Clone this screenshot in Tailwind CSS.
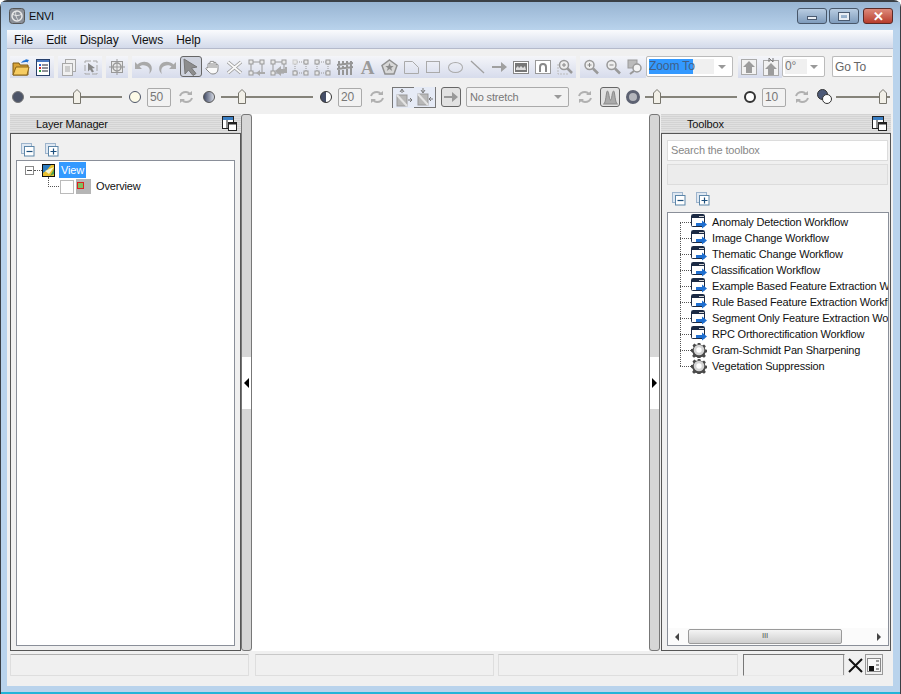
<!DOCTYPE html>
<html lang="en">
<head>
<meta charset="UTF-8">
<title>ENVI</title>
<script src="https://cdn.jsdelivr.net/npm/@tailwindcss/browser@4"></script>
</head>
<body class="bg-white overflow-hidden font-['Liberation_Sans',sans-serif] text-[11px] tracking-[-0.17px] text-[#111]">

<!-- shared icons -->
<svg class="hidden" width="0" height="0">
  <symbol id="refresh" viewBox="0 0 16 16"><path d="M2 7c1-3 3-4 6-4 2 0 3 1 4 2M14 9c-1 3-3 4-6 4-2 0-3-1-4-2" fill="none" stroke="#b0b0b0" stroke-width="2"/><path d="M9 6h5V2zM7 10H2v4z" fill="#b0b0b0"/></symbol>
  <symbol id="collapse" viewBox="0 0 14 14"><rect x=".5" y=".5" width="10" height="10" fill="#dfe8f2" stroke="#9db4cc"/><rect x="3.500" y="3.500" width="9.500" height="9.500" fill="#fff" stroke="#5d86a8"/><path d="M5.500 8.500h6" stroke="#1d4f7c" stroke-width="1.200"/></symbol>
  <symbol id="expand" viewBox="0 0 14 14"><rect x=".5" y=".5" width="10" height="10" fill="#dfe8f2" stroke="#9db4cc"/><rect x="3.500" y="3.500" width="9.500" height="9.500" fill="#fff" stroke="#5d86a8"/><path d="M5.500 8.500h6M8.500 5.500v6" stroke="#1d4f7c" stroke-width="1.200"/></symbol>
  <symbol id="dock" viewBox="0 0 15 15"><rect x=".5" y=".5" width="11" height="12" fill="#fff" stroke="#222"/><path d="M1 1h10v3H1z" fill="#3b7fc4"/><path d="M5 4v8" stroke="#222"/><rect x="6.500" y="6.500" width="8" height="8" fill="#fff" stroke="#222"/><path d="M7 7h7v1.500H7z" fill="#222"/></symbol>
  <symbol id="workflow" viewBox="0 0 16 16"><rect x=".5" y=".5" width="13" height="12" rx="1" fill="#fff" stroke="#1b2a44"/><path d="M1 1h12v3H1z" fill="#1b2a44"/><path d="M8 2h5v1H8z" fill="#d0d0d0"/><path d="M5 9h6V6.500l5 4-5 4V12H5z" fill="#1f6fd0"/></symbol>
  <symbol id="gear" viewBox="0 0 18 18"><path d="M7.500 1h3l.5 2.200 1.700.7 2-1.200 2 2-1.200 2 .7 1.700 2.200.5v2.600l-2.200.5-.7 1.700 1.200 2-2 2-2-1.200-1.700.7-.5 2.200h-3l-.5-2.200-1.700-.7-2 1.200-2-2 1.200-2-.7-1.700L0 10.600V8l2.200-.5.700-1.700-1.200-2 2-2 2 1.200L7.400 3z" fill="#4a4a4a"/><circle cx="9" cy="9" r="6" fill="#d4d4d4"/><circle cx="9" cy="9" r="3" fill="#fff"/></symbol>
  <symbol id="thumb" viewBox="0 0 8 15"><path d="M4 .5 7.500 4v10.500h-7V4z" fill="#f2f0e8" stroke="#77756c"/></symbol>
</svg>

<div class="w-[901px] h-[694px] flex flex-col rounded-t-[7px] border-t-2 border-x border-[#3a3f45] bg-[#b9d3ec]">

  <!-- title bar -->
  <div class="h-[28px] flex items-center bg-gradient-to-b from-[#98b4d2] to-[#b9d3ec] pl-[8px] pr-[7px] shrink-0">
    <svg width="16" height="16" viewBox="0 0 16 16"><rect x=".5" y=".5" width="15" height="15" rx="3" fill="#8c9199" stroke="#555"/><circle cx="8" cy="8" r="5" fill="none" stroke="#e8e8e8" stroke-width="1.500"/><path d="M3 6c3 2 7 2 10 0M7 3c-1 3 0 7 3 10" fill="none" stroke="#e8e8e8"/></svg>
    <span class="ml-[4px] text-[#0c0c0c]">ENVI</span>
    <div class="ml-auto flex gap-[2px] items-start">
      <div class="w-[30px] h-[16px] rounded-[3px] border border-[#48576a] bg-gradient-to-b from-[#b9cde2] to-[#7f9cbc] flex items-center justify-center"><div class="w-[10px] h-[4px] mt-[4px] bg-[#e9eef4] border border-[#4a5a70]"></div></div>
      <div class="w-[30px] h-[16px] rounded-[3px] border border-[#48576a] bg-gradient-to-b from-[#b9cde2] to-[#7f9cbc] flex items-center justify-center"><div class="w-[10px] h-[7px] border-2 border-[#e9eef4] outline outline-[#4a5a70]"></div></div>
      <div class="ml-[2px] w-[30px] h-[16px] rounded-[3px] border border-[#5b2a26] bg-gradient-to-b from-[#dd8a7b] to-[#b73b2c] flex items-center justify-center text-white font-bold text-[13px] leading-none">✕</div>
    </div>
  </div>

  <!-- client area -->
  <div class="mx-[6px] w-[886px] h-[656px] shrink-0 bg-[#f0f0f0] flex flex-col">

    <!-- menu -->
    <div class="h-[19px] shrink-0 flex items-center pt-[2px] pl-[7px] gap-[13px] text-[12px] tracking-[-0.05px] bg-gradient-to-b from-[#fafbfd] to-[#d3daea] border-b border-[#b5bacb]">
      <span>File</span><span>Edit</span><span>Display</span><span>Views</span><span>Help</span>
    </div>

    <!-- toolbar row 1 -->
    <div class="mt-[7px] h-[22px] shrink-0 flex pl-[3px] pr-[1px] text-[#777]">
      <div class="flex w-[44px] bg-gradient-to-b from-[#f4f5f9] to-[#d7dcec]">
        <div class="w-[22px] flex items-center justify-center"><svg width="18" height="17" viewBox="0 0 18 17"><path d="M1 4h6l1 2h8v10H1z" fill="#d9a338" stroke="#7d5a16"/><path d="M1 16l3-8h13l-2 8z" fill="#f6cc62" stroke="#8a6418"/><path d="M9 4c1-2 3-3 5-3l-1-1 4 1-2 3V3c-2 0-4 0-6 1z" fill="#1e6fd0"/></svg></div>
        <div class="w-[22px] flex items-center justify-center"><svg width="14" height="17" viewBox="0 0 14 17"><rect x=".5" y=".5" width="13" height="16" fill="#fff" stroke="#28406a"/><path d="M1 1h12v2H1z" fill="#4a78c0"/><path d="M3 5h2v2H3z" fill="#2c60d0"/><path d="M3 8h2v2H3z" fill="#d02c2c"/><path d="M3 11h2v2H3z" fill="#2ca040"/><path d="M6 6h6M6 9h6M6 12h6" stroke="#223"/></svg></div>
      </div>
      <div class="ml-[4px] flex w-[44px] bg-gradient-to-b from-[#f4f5f9] to-[#d7dcec]">
        <div class="w-[22px] flex items-center justify-center"><svg width="16" height="17" viewBox="0 0 16 17" fill="#f0f0f0" stroke="#a8a8a8"><rect x="4.500" y=".5" width="10" height="12"/><rect x="1.500" y="4.500" width="10" height="12"/><path d="M4 8h5M4 10h5M4 12h5"/></svg></div>
        <div class="w-[22px] flex items-center justify-center"><svg width="14" height="15" viewBox="0 0 14 15"><path d="M1 1h12v13H1z" fill="none" stroke="#a8a8a8" stroke-dasharray="6 2"/><path d="M4 3l7 5-3 .5 2 3-2 1-2-3-2 2z" fill="#888"/></svg></div>
      </div>
      <div class="ml-[4px] w-[22px] bg-gradient-to-b from-[#f4f5f9] to-[#d7dcec] flex items-center justify-center"><svg width="16" height="16" viewBox="0 0 16 16" fill="none" stroke="#999"><rect x="2.500" y="2.500" width="11" height="11" fill="#e8e8e8"/><circle cx="8" cy="8" r="4" stroke-width="1.500"/><path d="M8 0v16M0 8h16"/></svg></div>
      <div class="ml-[4px] flex w-[444px] bg-gradient-to-b from-[#f4f5f9] to-[#d7dcec]">
        <div class="w-[24px] flex items-center justify-center"><svg width="19" height="17" viewBox="0 0 19 17"><path d="M1 3v7h7L5.500 7.500C8 5.500 13 6 15 9c1 1.500 1 4 0 6 3-2 4-7 1-10-3-3-9-3-12.500.5z" fill="#a9a9a9"/></svg></div>
        <div class="w-[24px] flex items-center justify-center"><svg width="19" height="17" viewBox="0 0 19 17"><g transform="matrix(-1 0 0 1 19 0)"><path d="M1 3v7h7L5.500 7.500C8 5.500 13 6 15 9c1 1.500 1 4 0 6 3-2 4-7 1-10-3-3-9-3-12.500.5z" fill="#a9a9a9"/></g></svg></div>
        <div class="w-[22px] h-[21px] rounded-[3px] border border-[#666] bg-[#cfd3de] flex items-center justify-center"><svg width="17" height="18" viewBox="0 0 17 18"><path d="M2 1l13 8-5.500 1 4.500 5.500-3 2L6.500 12 3 16z" fill="#8d8d8d" stroke="#777"/></svg></div>
        <div class="w-[22px] flex items-center justify-center"><svg width="15" height="15" viewBox="0 0 15 15"><path d="M3 8V4c0-1 2-1 2 0V2c0-1 2-1 2 0v0c0-1 2-1 2 0v1c0-1 2-1 2 0v2c0-1 2-1 2 0v4c0 3-2 5-5 5-2 0-3-1-4-2L1 9c-.5-1 1-2 2-1z" fill="#fafafa" stroke="#8a8a8a"/><path d="M5 4v4M7 3v5M9 3v5M11 5v3" stroke="#8a8a8a"/></svg></div>
        <div class="w-[22px] flex items-center justify-center"><svg width="17" height="15" viewBox="0 0 17 15"><path d="M2 2l13 11M15 2L2 13" stroke="#9a9a9a" stroke-width="3.500"/><path d="M2 2l13 11M15 2L2 13" stroke="#f8f8f8" stroke-width="1.800"/></svg></div>
        <div class="w-[22px] flex items-center justify-center"><svg width="17" height="17" viewBox="0 0 17 17" fill="#e8e8e8" stroke="#999"><path d="M3 3h11v11H3z" fill="none"/><rect x="1" y="1" width="4" height="4"/><rect x="12" y="1" width="4" height="4"/><rect x="1" y="12" width="4" height="4"/><path d="M17 13h-5v-2l-4 3 4 3v-2h5z" fill="#aaa" stroke="none"/></svg></div>
        <div class="w-[22px] flex items-center justify-center"><svg width="17" height="17" viewBox="0 0 17 17" fill="#e8e8e8" stroke="#999"><path d="M3 3h11v11H3z" fill="none"/><rect x="1" y="1" width="4" height="4"/><rect x="12" y="1" width="4" height="4"/><rect x="1" y="12" width="4" height="4"/><path d="M17 8v6h-6v3l-6-5 6-5v3h4V8z" fill="#aaa" stroke="none"/></svg></div>
        <div class="w-[22px] flex items-center justify-center"><svg width="17" height="17" viewBox="0 0 17 17" fill="#e8e8e8" stroke="#999"><path d="M5 3h7M3 5v7M14 5v7M5 14h7" fill="none" stroke-dasharray="1 1"/><rect x="1" y="1" width="4" height="4" stroke="#ccc"/><rect x="12" y="1" width="4" height="4"/><rect x="1" y="12" width="4" height="4"/><rect x="12" y="12" width="4" height="4"/></svg></div>
        <div class="w-[22px] flex items-center justify-center"><svg width="17" height="17" viewBox="0 0 17 17" fill="#e8e8e8" stroke="#999"><path d="M3 5v7M14 5v7M5 3h7M5 14h7" fill="none" stroke-dasharray="1 1"/><rect x="1" y="1" width="4" height="4"/><rect x="12" y="1" width="4" height="4"/><rect x="1" y="12" width="4" height="4"/><rect x="12" y="12" width="4" height="4"/></svg></div>
        <div class="w-[23px] flex items-center justify-center"><svg width="16" height="15" viewBox="0 0 16 15" stroke="#969696" stroke-width="2"><path d="M2 1v14M6 1v14M10 1v14M14 1v14M0 5l16-2M0 9l16-2"/></svg></div>
        <div class="w-[22px] flex items-center justify-center font-['Liberation_Serif',serif] font-bold text-[19px] leading-none text-[#9a9a9a]">A</div>
        <div class="w-[22px] flex items-center justify-center"><svg width="17" height="16" viewBox="0 0 17 16"><path d="M8.500 1L16 6.500 13 15H4L1 6.500z" fill="#d8d8d8" stroke="#909090" stroke-width="1.500"/><path d="M8.500 4l1.200 3h3l-2.500 2 1 3-2.700-2-2.700 2 1-3L4.300 7h3z" fill="#8c8c8c"/></svg></div>
        <div class="w-[22px] flex items-center justify-center"><svg width="15" height="13" viewBox="0 0 15 13"><path d="M.5.5h8l6 6v6H.5z" fill="none" stroke="#aaa"/></svg></div>
        <div class="w-[22px] flex items-center justify-center"><div class="w-[14px] h-[12px] border border-[#aaa]"></div></div>
        <div class="w-[22px] flex items-center justify-center"><div class="w-[15px] h-[11px] rounded-[50%] border border-[#aaa]"></div></div>
        <div class="w-[22px] flex items-center justify-center"><svg width="15" height="14" viewBox="0 0 15 14"><path d="M1 1l13 12" stroke="#a0a0a0" stroke-width="1.300"/></svg></div>
        <div class="w-[22px] flex items-center justify-center"><svg width="15" height="10" viewBox="0 0 15 10"><path d="M0 4h9V0l6 5-6 5V6H0z" fill="#a0a0a0"/></svg></div>
        <div class="w-[22px] flex items-center justify-center"><svg width="16" height="13" viewBox="0 0 16 13"><rect x=".5" y=".5" width="15" height="12" fill="#fff" stroke="#888"/><rect x="2" y="2" width="12" height="9" fill="#777"/><path d="M3 9V7l2-2 1 2 2-2 2 2 2-2 1 4z" fill="#ddd"/></svg></div>
        <div class="w-[22px] flex items-center justify-center"><svg width="16" height="14" viewBox="0 0 16 14"><rect x=".5" y=".5" width="15" height="13" fill="#fff" stroke="#999"/><path d="M4 12V7a4 4 0 0 1 8 0v5h-2V7a2 2 0 0 0-4 0v5z" fill="#888"/></svg></div>
        <div class="w-[22px] flex items-center justify-center"><svg width="16" height="16" viewBox="0 0 16 16"><path d="M1 5v10h10" fill="none" stroke="#bbb" stroke-dasharray="2 1"/><circle cx="7" cy="6" r="4.500" fill="#eee" stroke="#999" stroke-width="1.500"/><path d="M5 6h4M7 4v4" stroke="#888"/><path d="M10 9l5 5" stroke="#999" stroke-width="2.500"/></svg></div>
      </div>
      <div class="ml-[4px] flex w-[66px] bg-gradient-to-b from-[#f4f5f9] to-[#d7dcec]">
        <div class="w-[22px] flex items-center justify-center"><svg width="16" height="16" viewBox="0 0 16 16"><circle cx="6.500" cy="6" r="4.500" fill="#eee" stroke="#999" stroke-width="1.500"/><path d="M4.500 6h4M6.500 4v4" stroke="#888"/><path d="M10 9.500l5 5" stroke="#999" stroke-width="2.500"/></svg></div>
        <div class="w-[22px] flex items-center justify-center"><svg width="16" height="16" viewBox="0 0 16 16"><circle cx="6.500" cy="6" r="4.500" fill="#eee" stroke="#999" stroke-width="1.500"/><path d="M4.500 6h4" stroke="#888"/><path d="M10 9.500l5 5" stroke="#999" stroke-width="2.500"/></svg></div>
        <div class="w-[22px] flex items-center justify-center"><svg width="16" height="16" viewBox="0 0 16 16"><rect x="1" y="1" width="9" height="8" fill="#bbb" stroke="#999"/><circle cx="10" cy="9" r="4" fill="#f4f4f4" stroke="#999" stroke-width="1.500"/><path d="M7 12l-4 3" stroke="#999" stroke-width="2"/></svg></div>
      </div>
      <div class="w-[87px] h-[21px] bg-white border border-[#bbb] rounded-[2px] flex items-center px-[2px] text-[12px] tracking-[-0.1px]">
        <div class="w-[65px] h-[15px] bg-[#f0f0f0]"><div class="w-[44px] h-[15px] leading-[15px] bg-[#3399ff] text-[#3f5f88] whitespace-nowrap">Zoom To</div></div>
        <span class="ml-auto mr-[4px] w-0 h-0 border-x-[4px] border-x-transparent border-t-[4px] border-t-[#999]"></span>
      </div>
      <div class="ml-[5px] flex w-[44px] bg-gradient-to-b from-[#f4f5f9] to-[#d7dcec]">
        <div class="w-[22px] flex items-center justify-center"><svg width="16" height="16" viewBox="0 0 16 16"><rect x=".5" y=".5" width="15" height="15" fill="#f2f2f2" stroke="#aaa"/><path d="M8 2l6 6h-3v6H5V8H2z" fill="#9c9c9c"/></svg></div>
        <div class="w-[22px] flex items-center justify-center"><svg width="16" height="18" viewBox="0 0 16 18"><rect x=".5" y="2.500" width="15" height="15" fill="#f2f2f2" stroke="#aaa"/><path d="M8 5l6 6h-3v6H5v-6H2z" fill="#9c9c9c"/><path d="M6 4V0l4 4V0" fill="none" stroke="#777"/></svg></div>
      </div>
      <div class="w-[43px] h-[21px] bg-white border border-[#bbb] rounded-[2px] flex items-center px-[2px] text-[12px] text-[#777]">
        <span class="bg-[#f0f0f0] w-[22px] leading-[15px]">0°</span>
        <span class="ml-auto mr-[4px] w-0 h-0 border-x-[4px] border-x-transparent border-t-[4px] border-t-[#999]"></span>
      </div>
      <div class="ml-[7px] flex-1 h-[21px] bg-white border-y border-l border-[#bbb] rounded-l-[2px] flex items-center px-[2px] text-[12px] text-[#666]">Go To</div>
    </div>

    <!-- toolbar row 2 -->
    <div class="mt-[7px] h-[24px] shrink-0 flex items-center pl-[5px] text-[#777]">
      <div class="w-[12px] h-[12px] rounded-full bg-[#4d5568] border border-[#777]"></div>
      <div class="relative ml-[6px] w-[92px] h-[2px] bg-[#85837a]"><svg class="absolute left-[43px] top-[-7px]" width="8" height="15"><use href="#thumb"/></svg></div>
      <div class="ml-[7px] w-[12px] h-[12px] rounded-full bg-[#fdfbe8] border border-[#4d5568]"></div>
      <div class="ml-[6px] w-[24px] h-[19px] bg-[#f2f2f2] border border-[#aaa] rounded-[2px] flex items-center px-[2px] text-[12px]">50</div>
      <svg class="ml-[7px]" width="16" height="16"><use href="#refresh"/></svg>
      <div class="ml-[9px] w-[12px] h-[12px] rounded-full bg-gradient-to-r from-[#454e68] to-[#d8dce6] border border-[#555]"></div>
      <div class="relative ml-[6px] w-[92px] h-[2px] bg-[#85837a]"><svg class="absolute left-[17px] top-[-7px]" width="8" height="15"><use href="#thumb"/></svg></div>
      <div class="ml-[7px] w-[12px] h-[12px] rounded-full bg-gradient-to-r from-[#454e68] from-50% to-white to-50% border border-[#333]"></div>
      <div class="ml-[6px] w-[24px] h-[19px] bg-[#f2f2f2] border border-[#aaa] rounded-[2px] flex items-center px-[2px] text-[12px]">20</div>
      <svg class="ml-[7px]" width="16" height="16"><use href="#refresh"/></svg>
      <div class="ml-[7px] w-[22px] h-[21px] border-l border-t border-[#777] bg-[#e6ebf6] flex items-center justify-center"><svg width="18" height="18" viewBox="0 0 18 18"><rect x="2" y="6" width="10" height="11" fill="#b8b8b8" stroke="#999"/><path d="M2 6l10 11" stroke="#e4e4e4" stroke-width="2"/><path d="M7 4V1M5 3l2-3 2 3M13 11h4M15 9l2 2-2 2" fill="none" stroke="#777"/></svg></div>
      <div class="w-[22px] h-[21px] border-r border-b border-[#777] bg-[#e6ebf6] flex items-center justify-center"><svg width="18" height="18" viewBox="0 0 18 18"><rect x="2" y="6" width="10" height="11" fill="#b8b8b8" stroke="#999"/><path d="M2 6l10 11" stroke="#e4e4e4" stroke-width="2"/><path d="M7 0v4M5 2l2 3 2-3M17 11h-4M15 9l-2 2 2 2" fill="none" stroke="#777"/></svg></div>
      <div class="ml-[5px] w-[20px] h-[20px] border border-[#666] rounded-[3px] bg-[#e2e2e2] flex items-center justify-center"><svg width="14" height="12" viewBox="0 0 14 12"><path d="M0 5h8V1l6 5-6 5V7H0z" fill="#999"/></svg></div>
      <div class="ml-[5px] w-[103px] h-[20px] bg-[#f2f2f2] border border-[#aaa] rounded-[2px] flex items-center px-[3px]">
        No stretch
        <span class="ml-auto mr-[3px] w-0 h-0 border-x-[4px] border-x-transparent border-t-[4px] border-t-[#999]"></span>
      </div>
      <svg class="ml-[8px]" width="16" height="16"><use href="#refresh"/></svg>
      <div class="ml-[7px] w-[20px] h-[20px] border border-[#666] rounded-[3px] bg-[#e2e2e2] flex items-center justify-center"><svg width="15" height="15" viewBox="0 0 15 15"><path d="M.5 14C3 14 3 1 4.500 1S6 10 7.500 10 9 1 10.500 1 12 14 14.500 14z" fill="#aaa" stroke="#888"/></svg></div>
      <div class="ml-[6px] w-[14px] h-[14px] rounded-full border-[3px] border-[#5d6272] bg-[#b4b6bc]"></div>
      <div class="relative ml-[5px] w-[92px] h-[2px] bg-[#85837a]"><svg class="absolute left-[8px] top-[-7px]" width="8" height="15"><use href="#thumb"/></svg></div>
      <div class="ml-[7px] w-[12px] h-[12px] rounded-full bg-white border-2 border-[#333]"></div>
      <div class="ml-[6px] w-[24px] h-[19px] bg-[#f2f2f2] border border-[#aaa] rounded-[2px] flex items-center px-[2px] text-[12px]">10</div>
      <svg class="ml-[8px]" width="16" height="16"><use href="#refresh"/></svg>
      <div class="relative ml-[7px] w-[16px] h-[16px]">
        <div class="absolute left-0 top-0 w-[11px] h-[11px] rounded-full bg-[#4d5a78] border border-[#333]"></div>
        <div class="absolute left-[5px] top-[5px] w-[10px] h-[10px] rounded-full bg-white border border-[#333]"></div>
      </div>
      <div class="relative ml-[3px] w-[54px] h-[2px] bg-[#85837a]"><svg class="absolute left-[43px] top-[-7px]" width="8" height="15"><use href="#thumb"/></svg></div>
    </div>

    <!-- panels -->
    <div class="mt-[5px] h-[537px] shrink-0 flex pl-[3px]">
      <!-- layer manager -->
      <div class="w-[231px] flex flex-col">
        <div class="h-[19px] shrink-0 flex items-center pl-[26px] pr-[4px] bg-[repeating-linear-gradient(180deg,#d3d3d3_0,#d3d3d3_1px,#e0e0e0_1px,#e0e0e0_2px)]">
          <span class="pt-[2px]">Layer Manager</span>
          <svg class="ml-auto" width="15" height="15"><use href="#dock"/></svg>
        </div>
        <div class="flex-1 min-h-0 border border-[#555] flex flex-col px-[5px] pb-[4px]">
          <div class="h-[26px] shrink-0 flex items-center gap-[10px] pl-[5px] pt-[5px]">
            <svg width="14" height="14"><use href="#collapse"/></svg>
            <svg width="14" height="14"><use href="#expand"/></svg>
          </div>
          <div class="relative flex-1 bg-white border border-[#8a8f99]">
            <div class="flex items-center h-[18px] pl-[8px]">
              <div class="w-[9px] h-[9px] border border-[#888] flex items-center justify-center"><div class="w-[5px] h-px bg-[#555]"></div></div>
              <div class="w-[8px] border-t border-dotted border-[#555]"></div>
              <svg width="13" height="13" viewBox="0 0 13 13"><rect x=".5" y=".5" width="12" height="12" fill="#e8c030" stroke="#111"/><path d="M1 1h8L5 6 1 9z" fill="#2c7cc0"/><path d="M12 3 7 10 3 7z" fill="#f6f6d0"/><path d="M12 10V5L8 12z" fill="#4ba04a"/></svg>
              <span class="ml-[4px] px-[2px] h-[16px] leading-[16px] w-[27px] bg-[#3399ff] text-white">View</span>
            </div>
            <div class="flex items-center h-[15px] pl-[43px]">
              <div class="w-[14px] h-[14px] bg-white border border-[#bbb]"></div>
              <svg class="ml-[2px]" width="15" height="15" viewBox="0 0 15 15"><rect width="15" height="15" fill="#b5b5b5"/><rect x="1.500" y="3.500" width="6" height="6" fill="#7fbf60" stroke="#e02020"/></svg>
              <span class="ml-[5px]">Overview</span>
            </div>
            <div class="absolute left-[31px] top-[16px] h-[10px] w-[11px] border-l border-b border-dotted border-[#555]"></div>
          </div>
        </div>
      </div>

      <!-- left splitter -->
      <div class="w-[11px] h-[537px] rounded-[3px] border border-[#777] bg-[#d6d6d6] flex flex-col justify-center">
        <div class="h-[52px] bg-white flex items-center justify-center"><span class="w-0 h-0 border-y-[5px] border-y-transparent border-r-[5px] border-r-black"></span></div>
      </div>

      <div class="w-[397px] bg-white"></div>

      <!-- right splitter -->
      <div class="w-[11px] h-[537px] rounded-[3px] border border-[#777] bg-[#d6d6d6] flex flex-col justify-center">
        <div class="h-[52px] bg-white flex items-center justify-center"><span class="w-0 h-0 border-y-[5px] border-y-transparent border-l-[5px] border-l-black"></span></div>
      </div>

      <!-- toolbox -->
      <div class="ml-[1px] w-[230px] flex flex-col">
        <div class="h-[19px] shrink-0 flex items-center pl-[26px] pr-[4px] bg-[repeating-linear-gradient(180deg,#d3d3d3_0,#d3d3d3_1px,#e0e0e0_1px,#e0e0e0_2px)]">
          <span class="pt-[2px]">Toolbox</span>
          <svg class="ml-auto" width="15" height="15"><use href="#dock"/></svg>
        </div>
        <div class="flex-1 min-h-0 border border-[#555] flex flex-col pl-[5px] pr-[1px] pb-[4px]">
          <div class="mt-[6px] mr-[1px] h-[21px] shrink-0 bg-white border border-[#dcdcdc] flex items-center px-[3px] text-[#888]">Search the toolbox</div>
          <div class="mt-[3px] mr-[1px] h-[21px] shrink-0 bg-[#ececec] border border-[#dcdcdc]"></div>
          <div class="h-[27px] shrink-0 flex items-center gap-[10px] pl-[5px]">
            <svg width="14" height="14"><use href="#collapse"/></svg>
            <svg width="14" height="14"><use href="#expand"/></svg>
          </div>
          <div class="relative flex-1 min-h-0 bg-white border border-[#8a8f99] flex flex-col">
            <div class="flex-1 min-h-0 overflow-hidden whitespace-nowrap pt-px">
              <div class="h-[16px] flex items-center pl-[12px]"><div class="w-[11px] shrink-0 border-t border-dotted border-[#555]"></div><svg class="shrink-0" width="16" height="16"><use href="#workflow"/></svg><span class="ml-[5px]">Anomaly Detection Workflow</span></div>
              <div class="h-[16px] flex items-center pl-[12px]"><div class="w-[11px] shrink-0 border-t border-dotted border-[#555]"></div><svg class="shrink-0" width="16" height="16"><use href="#workflow"/></svg><span class="ml-[5px]">Image Change Workflow</span></div>
              <div class="h-[16px] flex items-center pl-[12px]"><div class="w-[11px] shrink-0 border-t border-dotted border-[#555]"></div><svg class="shrink-0" width="16" height="16"><use href="#workflow"/></svg><span class="ml-[5px]">Thematic Change Workflow</span></div>
              <div class="h-[16px] flex items-center pl-[12px]"><div class="w-[11px] shrink-0 border-t border-dotted border-[#555]"></div><svg class="shrink-0" width="16" height="16"><use href="#workflow"/></svg><span class="ml-[4px]">Classification Workflow</span></div>
              <div class="h-[16px] flex items-center pl-[12px]"><div class="w-[11px] shrink-0 border-t border-dotted border-[#555]"></div><svg class="shrink-0" width="16" height="16"><use href="#workflow"/></svg><span class="ml-[5px]">Example Based Feature Extraction Workflow</span></div>
              <div class="h-[16px] flex items-center pl-[12px]"><div class="w-[11px] shrink-0 border-t border-dotted border-[#555]"></div><svg class="shrink-0" width="16" height="16"><use href="#workflow"/></svg><span class="ml-[5px]">Rule Based Feature Extraction Workflow</span></div>
              <div class="h-[16px] flex items-center pl-[12px]"><div class="w-[11px] shrink-0 border-t border-dotted border-[#555]"></div><svg class="shrink-0" width="16" height="16"><use href="#workflow"/></svg><span class="ml-[5px]">Segment Only Feature Extraction Workflow</span></div>
              <div class="h-[16px] flex items-center pl-[12px]"><div class="w-[11px] shrink-0 border-t border-dotted border-[#555]"></div><svg class="shrink-0" width="16" height="16"><use href="#workflow"/></svg><span class="ml-[5px]">RPC Orthorectification Workflow</span></div>
              <div class="h-[16px] flex items-center pl-[12px]"><div class="w-[11px] shrink-0 border-t border-dotted border-[#555]"></div><svg class="shrink-0" width="16" height="16"><use href="#gear"/></svg><span class="ml-[5px]">Gram-Schmidt Pan Sharpening</span></div>
              <div class="h-[16px] flex items-center pl-[12px]"><div class="w-[11px] shrink-0 border-t border-dotted border-[#555]"></div><svg class="shrink-0" width="16" height="16"><use href="#gear"/></svg><span class="ml-[5px]">Vegetation Suppression</span></div>
            </div>
            <div class="absolute left-[12px] top-[9px] h-[144px] border-l border-dotted border-[#555]"></div>
            <!-- scrollbar -->
            <div class="h-[17px] shrink-0 flex items-center px-[4px] bg-[#fbfbfb]">
              <span class="ml-[3px] w-0 h-0 border-y-[4px] border-y-transparent border-r-[4px] border-r-[#444]"></span>
              <div class="ml-[9px] w-[154px] h-[15px] rounded-[2px] border border-[#9a9a9a] bg-gradient-to-b from-[#f4f4f4] to-[#cfcfcf] text-[8px] leading-[12px] text-center text-[#555]">III</div>
              <span class="ml-auto mr-[3px] w-0 h-0 border-y-[4px] border-y-transparent border-l-[4px] border-l-[#444]"></span>
            </div>
          </div>
        </div>
      </div>
    </div>

    <!-- status bar -->
    <div class="mt-[3px] h-[22px] shrink-0 flex pl-[3px]">
      <div class="w-[239px] border border-[#dedede] border-t-[#b0b0b0] rounded-[1px]"></div>
      <div class="ml-[6px] w-[239px] border border-[#dedede] border-t-[#c8c8c8]"></div>
      <div class="ml-[4px] w-[240px] border border-[#dedede] border-t-[#c8c8c8]"></div>
      <div class="ml-[5px] w-[102px] border border-[#e8e8e8] border-t-[#777] border-l-[#777] flex justify-end"><div class="w-px bg-[#999]"></div></div>
      <div class="w-[20px] flex items-center justify-center"><svg width="15" height="15" viewBox="0 0 15 15"><path d="M1 1l13 13M14 1L1 14" stroke="#111" stroke-width="2"/></svg></div>
      <div class="w-[18px] h-[21px] border border-[#999] flex items-center justify-center"><svg width="14" height="14" viewBox="0 0 14 14"><rect x=".5" y=".5" width="13" height="13" fill="#f8f8f8" stroke="#888"/><rect x="2" y="8" width="5" height="5" fill="#111"/><path d="M9 2h3v2H9zM9 6h3v2H9zM9 10h3v2H9z" fill="#999"/></svg></div>
    </div>
  </div>

  <!-- bottom frame -->
  <div class="mt-[6px] h-[2px] shrink-0 bg-[#22b4d8]"></div>
  <div class="h-px shrink-0 bg-[#333]"></div>
</div>
</body>
</html>
